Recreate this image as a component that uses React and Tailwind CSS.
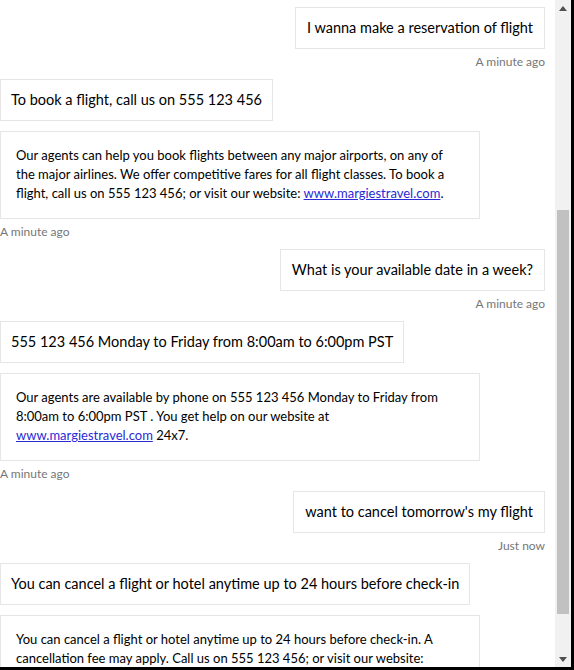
import React from 'react';

const font = { fontFamily: 'Lato, "Liberation Sans", sans-serif' };

const UserMessage = ({ text, time }) => (
  <div className="flex flex-col items-end mb-[7px]">
    <div className="border border-[#e6e6e6] bg-white px-[11px] py-[10px] text-[14.5px] leading-[20px] text-black">
      {text}
    </div>
    <div className="mt-[3px] text-[12px] leading-[20px] text-[#767676]">{time}</div>
  </div>
);

const BotMessage = ({ text, children, time }) => (
  <div className="flex flex-col items-start mb-[7px]">
    <div className="border border-[#e6e6e6] bg-white px-[10px] py-[10px] text-[14.5px] leading-[20px] text-black">
      {text}
    </div>
    <div className="mt-[10px] w-[480px] border border-[#e6e6e6] bg-white pl-[15px] pr-[12px] pt-[14px] pb-[15px] text-[13px] leading-[19px] text-black">
      {children}
    </div>
    {time && <div className="mt-[3px] text-[12px] leading-[20px] text-[#767676]">{time}</div>}
  </div>
);

const Link = ({ children }) => (
  <a href="#" className="text-[#2a2ad6] underline">{children}</a>
);

export default function App() {
  return (
    <div className="w-[574px] h-[670px] flex bg-white border-r-[3px] border-b-[3px] border-black overflow-hidden" style={font}>
      <div className="flex-1 overflow-hidden pt-[7px] pr-[10px]">
        <UserMessage text="I wanna make a reservation of flight" time="A minute ago" />
        <BotMessage text="To book a flight, call us on 555 123 456" time="A minute ago">
          Our agents can help you book flights between any major airports, on any of<br />
          the major airlines. We offer competitive fares for all flight classes. To book a<br />
          flight, call us on 555 123 456; or visit our website: <Link>www.margiestravel.com</Link>.
        </BotMessage>
        <UserMessage text="What is your available date in a week?" time="A minute ago" />
        <BotMessage text="555 123 456 Monday to Friday from 8:00am to 6:00pm PST" time="A minute ago">
          Our agents are available by phone on 555 123 456 Monday to Friday from<br />
          8:00am to 6:00pm PST . You get help on our website at<br />
          <Link>www.margiestravel.com</Link> 24x7.
        </BotMessage>
        <UserMessage text="want to cancel tomorrow's my flight" time="Just now" />
        <BotMessage text="You can cancel a flight or hotel anytime up to 24 hours before check-in">
          You can cancel a flight or hotel anytime up to 24 hours before check-in. A<br />
          cancellation fee may apply. Call us on 555 123 456; or visit our website:<br />
          <Link>www.margiestravel.com</Link>.
        </BotMessage>
      </div>
      <div className="w-[16px] flex flex-col bg-[#f1f1f1]">
        <div className="h-[16px] flex items-center justify-center">
          <svg width="8" height="5" viewBox="0 0 8 5"><path d="M4 0L8 5H0z" fill="#505050" /></svg>
        </div>
        <div className="h-[194px]" />
        <div className="mx-[2px] h-[404px] bg-[#c1c1c1]" />
        <div className="flex-1" />
        <div className="h-[16px] flex items-center justify-center">
          <svg width="8" height="5" viewBox="0 0 8 5"><path d="M0 0H8L4 5z" fill="#505050" /></svg>
        </div>
      </div>
    </div>
  );
}
